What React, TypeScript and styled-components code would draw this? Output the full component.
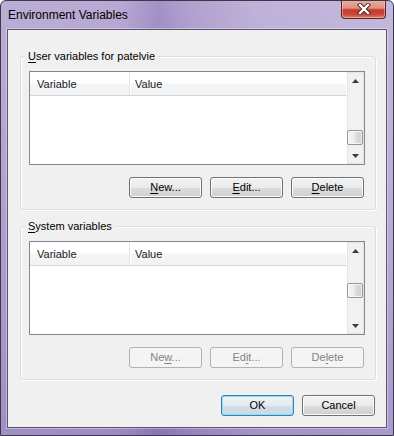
import styled, { createGlobalStyle } from "styled-components";

const GlobalStyle = createGlobalStyle`
  html, body {
    margin: 0;
    padding: 0;
    background: #ffffff;
  }
  body {
    font-family: "Liberation Sans", Arial, sans-serif;
    font-size: 11px;
  }
`;

const Window = styled.div`
  width: 394px;
  height: 436px;
  box-sizing: border-box;
  display: flex;
  flex-direction: column;
  border: 1px solid #3b3948;
  border-radius: 6px 6px 0 0;
  background:
    linear-gradient(180deg, rgba(255, 255, 255, 0.12) 0%, rgba(255, 255, 255, 0) 40%, rgba(60, 20, 120, 0.14) 100%),
    linear-gradient(90deg, #b2a3d0 0%, #ae9ecd 30%, #9782bf 40%, #a694c9 48%, #b6a8d3 65%, #bcaed8 100%);
  overflow: hidden;
`;

const TitleBar = styled.div`
  height: 28px;
  flex: none;
  display: flex;
  align-items: flex-start;
  padding: 0 7px;
`;

const Title = styled.div`
  align-self: center;
  font-size: 12px;
  color: #000;
  line-height: 15px;
  margin-top: 1px;
`;

const CloseButton = styled.div`
  margin-left: auto;
  margin-top: -1px;
  width: 45px;
  height: 19px;
  box-sizing: border-box;
  border: 1px solid #5d2620;
  border-top: none;
  border-radius: 0 0 4px 4px;
  background: linear-gradient(180deg, #eab0a3 0%, #de8f7f 45%, #c5392a 55%, #c94a36 80%, #da826c 100%);
  box-shadow: inset 0 0 0 1px rgba(255, 220, 210, 0.45);
  display: flex;
  align-items: center;
  justify-content: center;
`;

const Client = styled.div`
  flex: 1;
  margin: 0 6px 7px 6px;
  border: 1px solid #5a566e;
  box-shadow: 0 0 0 1px rgba(255, 255, 255, 0.35);
  background: #f0f0f0;
  display: flex;
  flex-direction: column;
  padding: 26px 10px 0 12px;
`;

const GroupBox = styled.div<{ $gap?: number }>`
  margin-top: ${(p) => p.$gap ?? 0}px;
  border: 1px solid #d5dfe5;
  border-radius: 3px;
  box-shadow: inset 1px 1px 0 #ffffff, 1px 1px 0 #ffffff;
  display: flex;
  flex-direction: column;
  padding: 0 10px 11px 8px;
`;

const GroupTitle = styled.div`
  align-self: flex-start;
  margin: -8px 0 0 -4px;
  padding: 0 3px;
  line-height: 15px;
  background: #f0f0f0;
  color: #000;
`;

const Key = styled.u`
  text-decoration: underline;
  text-underline-offset: 2px;
`;

const ListView = styled.div`
  margin-top: 7px;
  height: 94px;
  box-sizing: border-box;
  border: 1px solid #828790;
  background: #ffffff;
  display: flex;
`;

const ListBody = styled.div`
  flex: 1;
  display: flex;
  flex-direction: column;
`;

const Header = styled.div`
  height: 24px;
  box-sizing: border-box;
  display: flex;
  border-bottom: 1px solid #d5d5d5;
  border-right: 1px solid #ffffff;
  background: linear-gradient(180deg, #ffffff 0%, #ffffff 45%, #f4f5f7 55%, #f1f2f4 100%);
`;

const HeaderCell = styled.div<{ $width?: number }>`
  ${(p) => (p.$width ? `width: ${p.$width}px;` : "flex: 1;")}
  box-sizing: border-box;
  display: flex;
  align-items: center;
  padding-left: ${(p) => (p.$width ? 7 : 5)}px;
  color: #1a1a1a;
  border-right: ${(p) => (p.$width ? "1px solid #e3e4e6" : "none")};
  box-shadow: ${(p) => (p.$width ? "1px 0 0 #ffffff" : "none")};
`;

const ScrollBar = styled.div`
  width: 17px;
  flex: none;
  display: flex;
  flex-direction: column;
  background: #f1f1f1;
  box-shadow: inset 0 0 0 1px #e4e4e4;
`;

const ArrowButton = styled.div`
  height: 17px;
  flex: none;
  display: flex;
  align-items: center;
  justify-content: center;
`;

const Track = styled.div`
  flex: 1;
  display: flex;
  flex-direction: column;
`;

const Thumb = styled.div`
  height: 15px;
  box-sizing: border-box;
  margin-right: 1px;
  border: 1px solid #959595;
  border-radius: 2px;
  background: linear-gradient(90deg, #f4f4f4 0%, #ececec 45%, #dcdcdc 55%, #d0d0d0 100%);
  box-shadow: inset 0 0 0 1px rgba(255, 255, 255, 0.7);
`;

const ButtonRow = styled.div<{ $gap: number; $end: number }>`
  display: flex;
  justify-content: flex-end;
  gap: 8px;
  margin-top: ${(p) => p.$gap}px;
  margin-right: ${(p) => p.$end}px;
`;

const Button = styled.div<{ $disabled?: boolean; $default?: boolean }>`
  width: 73px;
  height: 21px;
  box-sizing: border-box;
  border-radius: 3px;
  display: flex;
  align-items: center;
  justify-content: center;
  line-height: 1;
  border: 1px solid #707070;
  color: #000;
  background: linear-gradient(180deg, #f2f2f2 0%, #ebebeb 50%, #dddddd 50%, #cfcfcf 100%);
  box-shadow: inset 0 0 0 1px #fcfcfc;

  ${(p) =>
    p.$default &&
    `
    border-color: #3c7fb1;
    background: linear-gradient(180deg, #eef3f6 0%, #e3ebf0 50%, #d3e0e8 50%, #c8d8e2 100%);
    box-shadow: inset 0 0 0 1px #8fdcf8;
  `}

  ${(p) =>
    p.$disabled &&
    `
    border-color: #adb2b5;
    background: #f4f4f4;
    color: #838383;
    box-shadow: none;
  `}
`;

const UpArrow = () => (
  <svg width="7" height="4" viewBox="0 0 7 4">
    <path d="M0 4 L3.5 0 L7 4 Z" fill="#3c3c3c" />
  </svg>
);

const DownArrow = () => (
  <svg width="7" height="4" viewBox="0 0 7 4">
    <path d="M0 0 L7 0 L3.5 4 Z" fill="#3c3c3c" />
  </svg>
);

const CloseGlyph = () => (
  <svg width="14" height="12" viewBox="0 0 14 12">
    <path d="M3 2 L11 10 M11 2 L3 10" stroke="#4a1c18" strokeWidth="4.2" strokeLinecap="square" />
    <path d="M3 2 L11 10 M11 2 L3 10" stroke="#ffffff" strokeWidth="2.4" strokeLinecap="square" />
  </svg>
);

type Item = { text: string; key: number };

const Label = ({ text, k }: { text: string; k: number }) => (
  <>
    {text.slice(0, k)}
    <Key>{text[k]}</Key>
    {text.slice(k + 1)}
  </>
);

const VariableList = ({ thumbOffset }: { thumbOffset: number }) => (
  <ListView>
    <ListBody>
      <Header>
        <HeaderCell $width={100}>Variable</HeaderCell>
        <HeaderCell>Value</HeaderCell>
      </Header>
    </ListBody>
    <ScrollBar>
      <ArrowButton>
        <UpArrow />
      </ArrowButton>
      <Track>
        <Thumb style={{ marginTop: thumbOffset }} />
      </Track>
      <ArrowButton>
        <DownArrow />
      </ArrowButton>
    </ScrollBar>
  </ListView>
);

const Group = ({
  title,
  titleKey,
  buttons,
  disabled,
  thumbOffset,
  gap,
}: {
  title: string;
  titleKey: number;
  buttons: Item[];
  disabled?: boolean;
  thumbOffset: number;
  gap?: number;
}) => (
  <GroupBox $gap={gap}>
    <GroupTitle>
      <Label text={title} k={titleKey} />
    </GroupTitle>
    <VariableList thumbOffset={thumbOffset} />
    <ButtonRow $gap={12} $end={1}>
      {buttons.map((b) => (
        <Button key={b.text} $disabled={disabled}>
          <span>
            <Label text={b.text} k={b.key} />
          </span>
        </Button>
      ))}
    </ButtonRow>
  </GroupBox>
);

export default function App() {
  return (
    <>
      <GlobalStyle />
      <Window>
        <TitleBar>
          <Title>Environment Variables</Title>
          <CloseButton>
            <CloseGlyph />
          </CloseButton>
        </TitleBar>
        <Client>
          <Group
            title="User variables for patelvie"
            titleKey={0}
            thumbOffset={41}
            buttons={[
              { text: "New...", key: 0 },
              { text: "Edit...", key: 0 },
              { text: "Delete", key: 0 },
            ]}
          />
          <Group
            title="System variables"
            titleKey={0}
            gap={16}
            disabled
            thumbOffset={24}
            buttons={[
              { text: "New...", key: 2 },
              { text: "Edit...", key: 2 },
              { text: "Delete", key: 2 },
            ]}
          />
          <ButtonRow $gap={15} $end={1}>
            <Button $default>OK</Button>
            <Button>Cancel</Button>
          </ButtonRow>
        </Client>
      </Window>
    </>
  );
}
